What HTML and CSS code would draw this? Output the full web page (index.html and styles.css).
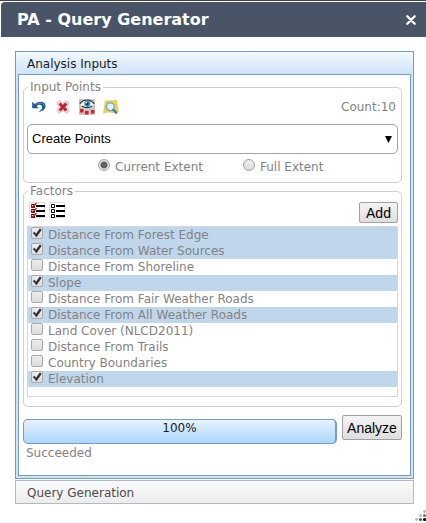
FILE: index.html
```html
<!DOCTYPE html>
<html lang="en">
<head>
<meta charset="utf-8">
<title>PA - Query Generator</title>
<link rel="stylesheet" href="styles.css">
</head>
<body>
<main class="window">
  <header class="titlebar">
    <h1>PA - Query Generator</h1>
    <button class="close" type="button" aria-label="Close"><svg width="10" height="10" viewBox="0 0 10 10"><path d="M1.3 1.3 8.7 8.7M8.7 1.3 1.3 8.7" stroke="#fff" stroke-width="2.3" stroke-linecap="round"/></svg></button>
  </header>
  <div class="content">
    <section class="pane">
      <h2 class="pane-title">Analysis Inputs</h2>
      <div class="pane-body">
        <fieldset class="group">
          <legend>Input Points</legend>
          <div class="toolbar points-bar">
            <button class="tool" type="button" aria-label="Undo"><svg width="16" height="16" viewBox="0 0 16 16"><path d="M1.2 2.8v6.400h6.600L5.600 7c2-2 5.300-1.600 5.500 1 .2 1.900-1.300 3.800-4.100 5.200 4.600-.7 7.600-3 7.600-6.100C14.600 2.700 8.300 1.300 3.600 5z" fill="#215a94"/><path d="M5 5.200c3.500-2.200 7.600-1.300 8.200 1.600" fill="none" stroke="#5e91c4" stroke-width="1"/></svg></button>
            <button class="tool" type="button" aria-label="Delete"><svg width="16" height="16" viewBox="0 0 16 16"><path d="M4.600 4.500 11.400 11.500M11.400 4.500 4.600 11.500" stroke="#f5cccc" stroke-width="6" stroke-linecap="round"/><path d="M4.700 4.500 11.300 11.500M11.300 4.500 4.700 11.500" stroke="#b92532" stroke-width="2.800"/></svg></button>
            <button class="tool" type="button" aria-label="Show points"><svg width="16" height="16" viewBox="0 0 16 16"><path d="M0 0h16v16H0z" fill="#c8c4c2"/><path d="M1 5.500Q8-2 15 5.500 8 11.500 1 5.500z" fill="#f5f8fa"/><path d="M.8 4.800C4.500-.2 11.500-.2 15.200 4.800M3 7.200Q8 9.800 13 7.200" fill="none" stroke="#25303b" stroke-width="1.100"/><circle cx="8.300" cy="4.800" r="3.100" fill="#3a94c4"/><circle cx="8.300" cy="4.800" r="1.400" fill="#10293b"/><circle cx="7.300" cy="3.700" r=".8" fill="#fff"/><path d="M1 10h3.500v3.500H1zM6 12h3.500v3.500H6zM12 11h3.500v3.500H12z" fill="#dc1e1e"/></svg></button>
            <button class="tool" type="button" aria-label="Find points"><svg width="16" height="16" viewBox="0 0 16 16"><path d="M2 1.500 14 1l1.700 12.200-4 .8-6.500-.5L0 14.500z" fill="#e8d250"/><circle cx="7.300" cy="7.700" r="3.900" fill="#e5f3fc" stroke="#72a3d2" stroke-width="1.300"/><path d="m10.300 10.800 3 3" stroke="#3976b8" stroke-width="2.300" stroke-linecap="round"/></svg></button>
            <span class="count">Count:10</span>
          </div>
          <div class="picker">
            <select aria-label="Point source"><option>Create Points</option></select>
            <svg class="arrow" width="7" height="7" viewBox="0 0 7 7"><path d="M0 0h7L3.500 7z"/></svg>
          </div>
          <div class="extents">
            <label><input type="radio" name="extent" checked>Current Extent</label>
            <label><input type="radio" name="extent">Full Extent</label>
          </div>
        </fieldset>
        <fieldset class="group">
          <legend>Factors</legend>
          <div class="toolbar factors-bar">
            <button class="tool" type="button" aria-label="Select all"><svg width="16" height="16" viewBox="0 0 16 16"><path d="M.5.500h15v15H.5z" fill="#fff" stroke="#dadada"/><path d="M7 3h9v2H7zM7 8h9v2H7zM7 13h9v2H7z"/><path d="M2.500 2.500h3v3h-3zM2.500 7.500h3v3h-3zM2.500 12.500h3v3h-3z" fill="#fff" stroke="#000"/><path d="m2 3.500 1.800 1.500L7.500 1M2 8.500 3.800 10l3.700-4M2 13.500 3.800 15l3.700-4" fill="none" stroke="#ee1515" stroke-width="1.500"/></svg></button>
            <button class="tool" type="button" aria-label="Clear all"><svg width="16" height="16" viewBox="0 0 16 16"><path d="M.5.500h15v15H.5z" fill="#fff" stroke="#dadada"/><path d="M7 3h9v2H7zM7 8h9v2H7zM7 13h9v2H7z"/><path d="M2.500 2.500h3v3h-3zM2.500 7.500h3v3h-3zM2.500 12.500h3v3h-3z" fill="#fff" stroke="#000"/></svg></button>
            <button class="push add" type="button">Add</button>
          </div>
          <ul class="factors">
            <li><label><input type="checkbox" checked>Distance From Forest Edge</label></li>
            <li><label><input type="checkbox" checked>Distance From Water Sources</label></li>
            <li><label><input type="checkbox">Distance From Shoreline</label></li>
            <li><label><input type="checkbox" checked>Slope</label></li>
            <li><label><input type="checkbox">Distance From Fair Weather Roads</label></li>
            <li><label><input type="checkbox" checked>Distance From All Weather Roads</label></li>
            <li><label><input type="checkbox">Land Cover (NLCD2011)</label></li>
            <li><label><input type="checkbox">Distance From Trails</label></li>
            <li><label><input type="checkbox">Country Boundaries</label></li>
            <li><label><input type="checkbox" checked>Elevation</label></li>
          </ul>
        </fieldset>
        <div class="run">
          <div class="progress" role="progressbar" aria-label="Analysis progress" aria-valuenow="100" aria-valuemin="0" aria-valuemax="100">100%</div>
          <button class="push analyze" type="button">Analyze</button>
        </div>
        <p class="status">Succeeded</p>
      </div>
    </section>
    <button class="collapsed" type="button">Query Generation</button>
  </div>
  <svg class="grip" width="11" height="12" viewBox="0 0 11 12"><g fill="#b5b5b5"><circle cx="9.500" cy="1.500" r="1.400"/><circle cx="5.500" cy="5.500" r="1.400"/><circle cx="1.500" cy="9.500" r="1.400"/></g><circle cx="9.500" cy="5.500" r="1.500" fill="#777"/><circle cx="5.500" cy="9.500" r="1.500" fill="#555"/><circle cx="9.500" cy="9.500" r="1.600"/></svg>
</main>
</body>
</html>
```
FILE: styles.css
```css
* {
  box-sizing: border-box;
}

body {
  margin: 0;
  background: #fff;
  color: #838383;
  font: 12px/16px "DejaVu Sans", Verdana, sans-serif;
}

h1, h2, p, ul, fieldset {
  margin: 0;
  padding: 0;
}

button, select, input {
  margin: 0;
  font: inherit;
}

svg {
  display: block;
}

.window {
  position: relative;
  min-height: 100vh;
  border-top: 1px solid #453f49;
}

.titlebar {
  display: flex;
  align-items: center;
  justify-content: space-between;
  height: 35px;
  margin: 1px 0 0 1px;
  padding: 0 10px 0 16px;
  border-radius: 4px 0 0 0;
  background: #495567;
  color: #fff;
}

.titlebar h1 {
  font-size: 16px;
  line-height: 20px;
}

.close, .tool {
  padding: 0;
  border: 0;
  background: none;
}

.content {
  padding: 14px 12px 0 15px;
}

.pane {
  padding: 0 2px 2px;
  border: 1px solid #769dc0;
  background: #cfe3f8;
}

.pane-title {
  height: 22px;
  margin: 0 -2px;
  padding: 0 11px;
  background: linear-gradient(#f2f8fe, #cfe5fa);
  color: #1b1b1b;
  font-size: 12px;
  font-weight: normal;
  line-height: 25px;
}

.pane-body {
  padding: 4px 8px 14px 4px;
  border: 1px solid #769dc0;
  background: #fff;
}

.group {
  min-width: 0;
  padding: 0 3px;
  border: 1px solid #d0d0d0;
  border-radius: 5px;
}

.group legend {
  height: 16px;
  margin-left: 1px;
  padding: 0 2px;
}

.toolbar {
  display: flex;
}

.points-bar {
  gap: 8px;
  height: 29px;
  padding: 4px 2px 0 4px;
}

.tool {
  width: 16px;
  height: 16px;
}

.count {
  margin-left: auto;
}

.picker {
  display: grid;
  align-items: center;
}

.picker select, .picker .arrow {
  grid-area: 1 / 1;
}

.picker select {
  appearance: none;
  width: 100%;
  height: 30px;
  padding: 0 24px 0 4px;
  border: 1px solid #a3a3a3;
  border-radius: 5px;
  background: #fff;
  color: #000;
  font: 13px/16px "Liberation Sans", Arial, sans-serif;
}

.picker .arrow {
  justify-self: end;
  margin-right: 6px;
  pointer-events: none;
}

.extents {
  display: flex;
  gap: 40px;
  height: 28px;
  padding: 5px 0 0 71px;
}

.extents label {
  display: flex;
  gap: 5px;
}

.extents input {
  appearance: none;
  width: 12px;
  height: 12px;
  border: 1px solid #a0a0a0;
  border-radius: 50%;
  background: linear-gradient(#eee, #dcdcdc);
}

.extents input:checked {
  background: radial-gradient(circle, #606060 3px, #e6e6e6 4px);
}

.factors-bar {
  gap: 4px;
  height: 27px;
  padding: 3px 0 0 2px;
}

.push {
  padding: 0;
  border: 1px solid #a0a0a0;
  border-radius: 2px;
  background: linear-gradient(#f4f4f4, #dedede);
  color: #000;
  font: 14px/16px "Liberation Sans", Arial, sans-serif;
}

.add {
  width: 39px;
  height: 21px;
  margin-left: auto;
}

.factors {
  height: 171px;
  margin-bottom: 9px;
  overflow: auto;
  border: 1px solid #d8d8d8;
  list-style: none;
}

.factors label {
  display: flex;
  gap: 5px;
  height: 16px;
  padding-left: 3px;
}

.factors li:has(:checked) {
  background: #c0d6eb;
}

.factors input {
  appearance: none;
  display: grid;
  width: 12px;
  height: 12px;
  border: 1px solid #a9a9a9;
  border-radius: 2px;
  background: linear-gradient(#eee, #dcdcdc);
}

.factors input:checked::before {
  content: "";
  background: #333;
  clip-path: polygon(8% 50%, 25% 38%, 40% 58%, 78% 5%, 98% 18%, 45% 92%);
}

.run {
  display: flex;
  align-items: flex-start;
  gap: 5px;
  padding-top: 8px;
}

.progress {
  flex: 1;
  height: 25px;
  margin-top: 4px;
  border: 1px solid #769dc0;
  border-right-width: 2px;
  border-radius: 5px;
  background: linear-gradient(#e8f3ff, #abd6ff);
  color: #1b1b1b;
  text-align: center;
}

.analyze {
  width: 60px;
  height: 25px;
}

.status {
  padding: 1px 3px 0;
}

.collapsed {
  display: block;
  width: 100%;
  height: 24px;
  margin-top: 1px;
  padding: 2px 11px 0;
  border: 1px solid #b4b8c6;
  background: linear-gradient(#fafafa, #ececec);
  color: #4b4b4b;
  text-align: left;
}

.grip {
  position: absolute;
  right: 0;
  bottom: 1px;
}
```
